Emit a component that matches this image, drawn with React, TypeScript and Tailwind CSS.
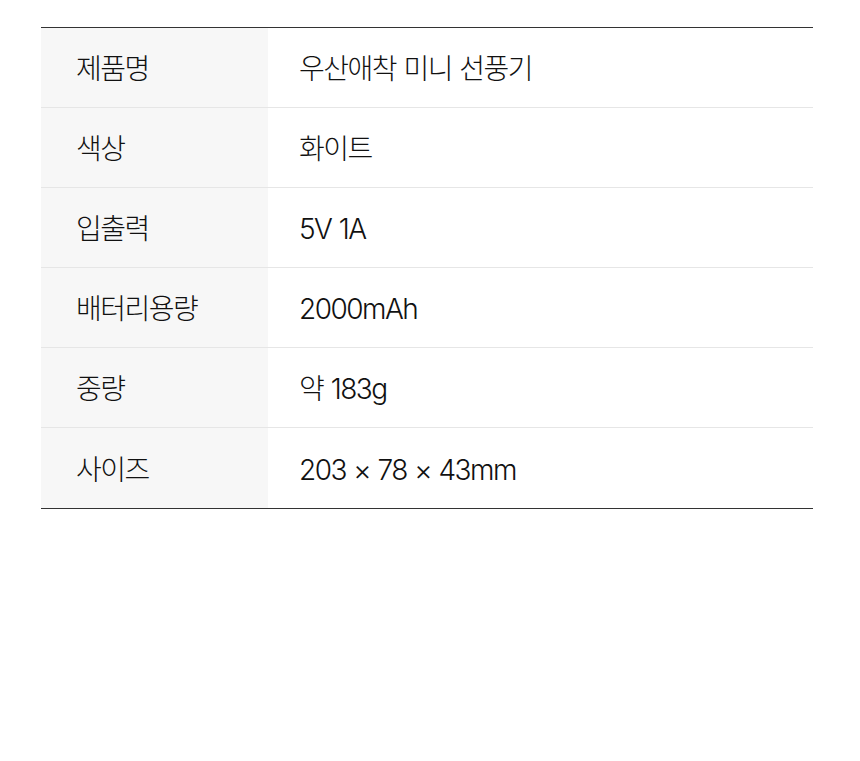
import React from 'react';

const rows: [string, string][] = [
  ['제품명', '우산애착 미니 선풍기'],
  ['색상', '화이트'],
  ['입출력', '5V 1A'],
  ['배터리용량', '2000mAh'],
  ['중량', '약 183g'],
  ['사이즈', '203 × 78 × 43mm'],
];

export default function App() {
  return (
    <div
      className="w-[860px] h-[761px] bg-white pt-[27px] pl-[41px]"
      style={{ fontFamily: 'Inter, "Noto Sans CJK KR", sans-serif' }}
    >
      <div className="w-[772px] border-t border-b border-[#333333]">
        {rows.map(([label, value], i) => (
          <div
            key={label}
            className={`flex h-[80px] ${i < rows.length - 1 ? 'border-b border-[#e6e6e6]' : ''}`}
          >
            <div className="w-[227px] bg-[#f7f7f7] flex items-center pl-[35px] pt-[3px] text-[28px] font-light text-[#111111] tracking-[-1.5px]">
              {label}
            </div>
            <div className="flex-1 flex items-center pl-[31px] pt-[3px] text-[28px] font-light text-[#111111] tracking-[-1.5px] [word-spacing:1px]">
              {value}
            </div>
          </div>
        ))}
      </div>
    </div>
  );
}
